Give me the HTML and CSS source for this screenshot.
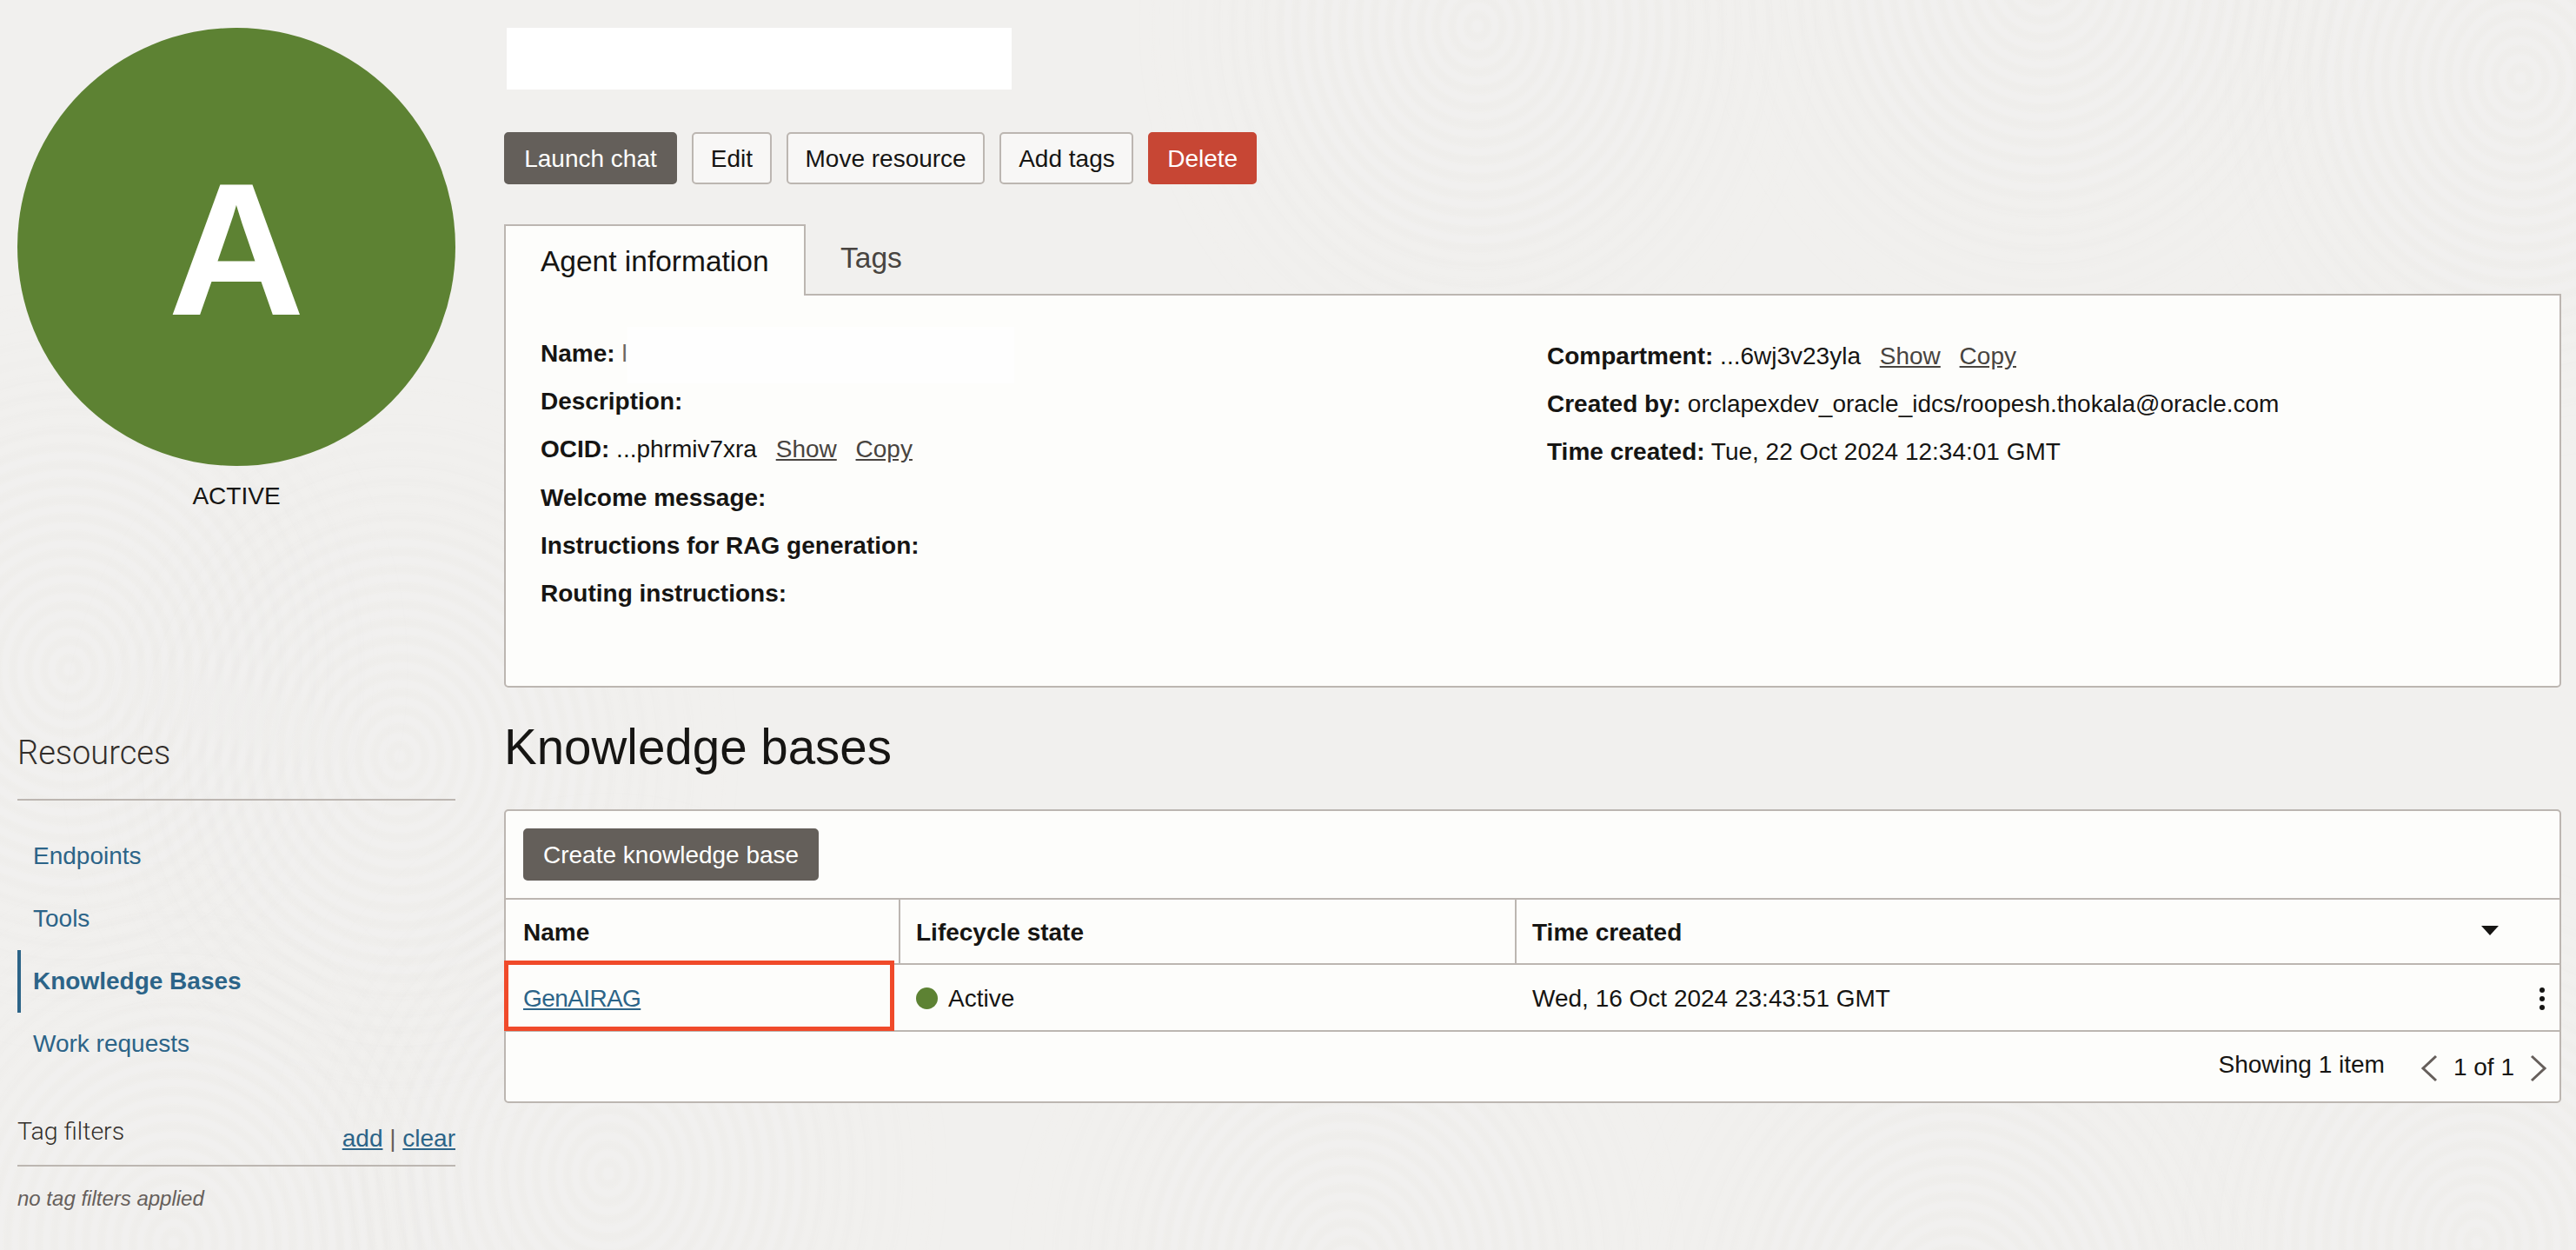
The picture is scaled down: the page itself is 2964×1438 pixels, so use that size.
FILE: index.html
```html
<!DOCTYPE html>
<html lang="en">

<head>
    <meta charset="UTF-8">
    <meta name="viewport" content="width=device-width, initial-scale=1.0">
    <title>Agent details</title>
    <link rel="stylesheet" href="styles.css">
</head>

<body>

    <!-- faint swirls of the console background -->
    <div class="texture">
        <div class="swirl swirl-a"></div>
        <div class="swirl swirl-b"></div>
        <div class="swirl swirl-c"></div>
        <div class="swirl swirl-d"></div>
        <div class="swirl swirl-e"></div>
        <div class="swirl swirl-f"></div>
        <div class="swirl swirl-g"></div>
        <div class="swirl swirl-h"></div>
        <div class="swirl swirl-i"></div>
        <div class="swirl swirl-j"></div>
    </div>

    <div class="page">

        <aside class="sidebar">
            <div class="avatar">A</div>
            <div class="status">ACTIVE</div>

            <h3 class="side-title">Resources</h3>
            <ul class="side-nav">
                <li><a href="#">Endpoints</a></li>
                <li><a href="#">Tools</a></li>
                <li class="selected"><a href="#">Knowledge Bases</a></li>
                <li><a href="#">Work requests</a></li>
            </ul>

            <div class="filter-head">
                <span class="filter-title">Tag filters</span>
                <span class="filter-links"><a href="#">add</a> | <a href="#">clear</a></span>
            </div>
            <p class="filter-empty">no tag filters applied</p>
        </aside>

        <main class="content">
            <div class="title-blank"></div>

            <div class="actions">
                <button class="btn btn-dark btn-launch">Launch chat</button>
                <button class="btn">Edit</button>
                <button class="btn">Move resource</button>
                <button class="btn">Add tags</button>
                <button class="btn btn-danger">Delete</button>
            </div>

            <div class="tabs">
                <div class="tab active">Agent information</div>
                <div class="tab">Tags</div>
            </div>

            <section class="info-panel">
                <div class="info-col">
                    <div class="info-row"><b>Name:</b> <span class="name-sliver">l</span><span class="name-blank"></span></div>
                    <div class="info-row"><b>Description:</b></div>
                    <div class="info-row"><b>OCID:</b> ...phrmiv7xra <a class="plain-link" href="#">Show</a> <a class="plain-link" href="#">Copy</a></div>
                    <div class="info-row"><b>Welcome message:</b></div>
                    <div class="info-row"><b>Instructions for RAG generation:</b></div>
                    <div class="info-row"><b>Routing instructions:</b></div>
                </div>
                <div class="info-col info-col-right">
                    <div class="info-row"><b>Compartment:</b> ...6wj3v23yla <a class="plain-link" href="#">Show</a> <a class="plain-link" href="#">Copy</a></div>
                    <div class="info-row"><b>Created by:</b> orclapexdev_oracle_idcs/roopesh.thokala@oracle.com</div>
                    <div class="info-row"><b>Time created:</b> Tue, 22 Oct 2024 12:34:01 GMT</div>
                </div>
            </section>

            <h2 class="section-title">Knowledge bases</h2>

            <section class="table-card">
                <div class="table-toolbar">
                    <button class="btn btn-dark">Create knowledge base</button>
                </div>
                <div class="table-row table-head">
                    <div class="cell cell-name">Name</div>
                    <div class="cell cell-state">Lifecycle state</div>
                    <div class="cell cell-time">
                        Time created
                        <svg class="sort-icon" width="20" height="11" viewBox="0 0 20 11"><path d="M0 0H20L10 11Z" fill="#161513"/></svg>
                    </div>
                </div>
                <div class="table-row table-body">
                    <div class="cell cell-name"><a class="link" href="#">GenAIRAG</a></div>
                    <div class="cell cell-state"><span class="dot"></span>Active</div>
                    <div class="cell cell-time">
                        Wed, 16 Oct 2024 23:43:51 GMT
                        <svg class="kebab" width="8" height="28" viewBox="0 0 8 28" fill="#161513"><circle cx="4" cy="4" r="3"/><circle cx="4" cy="14" r="3"/><circle cx="4" cy="24" r="3"/></svg>
                    </div>
                </div>
                <div class="table-footer">
                    <span class="showing">Showing 1 item</span>
                    <svg class="pager-icon pager-prev" width="20" height="32" viewBox="0 0 20 32"><path d="M18 2L3 16L18 30" fill="none" stroke="#665f5b" stroke-width="3"/></svg>
                    <span class="page-count">1 of 1</span>
                    <svg class="pager-icon pager-next" width="20" height="32" viewBox="0 0 20 32"><path d="M2 2L17 16L2 30" fill="none" stroke="#665f5b" stroke-width="3"/></svg>
                </div>
                <div class="callout"></div>
            </section>
        </main>

    </div>

</body>

</html>
```

FILE: styles.css
```css
* {
    box-sizing: border-box;
}

html,
body {
    margin: 0;
    height: 100%;
    overflow: hidden;
}

body {
    font-family: "Liberation Sans", Arial, sans-serif;
    font-size: 28px;
    color: #161513;
    background-color: #f1f0ee;
}

a {
    color: #2c6488;
}

/* background */
.texture {
    position: absolute;
    inset: 0;
    overflow: hidden;
}

.swirl {
    position: absolute;
    width: 800px;
    height: 900px;
    border-radius: 50%;
    background: repeating-radial-gradient(ellipse, rgba(255, 255, 255, 0.06) 0 5px, rgba(215, 212, 208, 0.05) 9px 13px, rgba(255, 255, 255, 0.06) 18px);
    -webkit-mask-image: radial-gradient(ellipse, #000 40%, transparent 70%);
    mask-image: radial-gradient(ellipse, #000 40%, transparent 70%);
}

.swirl-a { left: 1300px; top: -420px; }
.swirl-b { left: 1950px; top: -480px; }
.swirl-c { left: 2500px; top: -360px; }
.swirl-d { left: -320px; top: 320px; }
.swirl-e { left: 60px; top: 420px; }
.swirl-f { left: -200px; top: 980px; }
.swirl-g { left: 300px; top: 900px; }
.swirl-h { left: 1150px; top: 1010px; }
.swirl-i { left: 1850px; top: 1060px; }
.swirl-j { left: 2450px; top: 980px; }

.page {
    position: relative;
    display: flex;
    padding: 32px 17px 0 20px;
}

/* left column */
.sidebar {
    width: 504px;
    flex-shrink: 0;
}

.avatar {
    width: 504px;
    height: 504px;
    border-radius: 50%;
    background-color: #5d8233;
    color: #fff;
    font-size: 218px;
    font-weight: bold;
    line-height: 510px;
    text-align: center;
}

.status {
    margin-top: 18px;
    line-height: 34px;
    text-align: center;
}

.side-title {
    margin: 255px 0 0;
    padding-bottom: 30px;
    border-bottom: 2px solid #bcb6b1;
    font-family: Roboto, sans-serif;
    font-size: 38px;
    font-weight: 300;
    line-height: 46px;
    color: #312d2a;
}

.side-nav {
    list-style: none;
    margin: 28px 0 0;
    padding: 0;
}

.side-nav li {
    height: 72px;
    padding-left: 18px;
    line-height: 72px;
}

.side-nav a {
    text-decoration: none;
}

.side-nav .selected {
    padding-left: 14px;
    border-left: 4px solid #2c6488;
    font-weight: bold;
}

.filter-head {
    display: flex;
    justify-content: space-between;
    align-items: flex-end;
    margin-top: 40px;
    padding-bottom: 13px;
    border-bottom: 2px solid #bcb6b1;
}

.filter-title {
    font-family: Roboto, sans-serif;
    font-size: 28.5px;
    font-weight: 300;
    line-height: 50px;
    color: #312d2a;
}

.filter-links {
    line-height: 34px;
    color: #665f5b;
}

.filter-empty {
    margin: 23px 0 0;
    font-size: 24px;
    font-style: italic;
    color: #665f5b;
}

/* right column */
.content {
    flex: 1;
    margin-left: 56px;
    min-width: 0;
}

.title-blank {
    width: 581px;
    height: 71px;
    margin-left: 3px;
    background-color: #fff;
}

.actions {
    display: flex;
    gap: 17px;
    margin-top: 49px;
}

.btn {
    height: 60px;
    padding: 2px 19.75px 0;
    border: 2px solid #bcb6b1;
    border-radius: 5px;
    background-color: #f8f7f6;
    color: #161513;
    font-family: inherit;
    font-size: 28px;
}

.btn-dark {
    padding: 2px 21px 0;
    border-color: #645f5a;
    background-color: #645f5a;
    color: #fff;
}

.btn-launch {
    min-width: 199px;
}

.btn-danger {
    border-color: #c74634;
    background-color: #c74634;
    color: #fff;
}

.tabs {
    display: flex;
    margin-top: 46px;
    margin-bottom: -2px;
}

.tab {
    height: 80px;
    padding: 0 40px;
    color: #484440;
    font-size: 33.5px;
    line-height: 78px;
}

.tab.active {
    position: relative;
    z-index: 1;
    height: 82px;
    padding: 0 40.5px 0 40px;
    border: 2px solid #bcb6b1;
    border-bottom: none;
    background-color: #fdfdfb;
    color: #161513;
    line-height: 82px;
}

.info-panel {
    display: flex;
    height: 453px;
    padding: 39px 40px 0;
    border: 2px solid #bcb6b1;
    border-radius: 0 0 5px 5px;
    background-color: #fdfdfb;
}

.info-col {
    flex: none;
    width: 1158px;
}

.info-col-right {
    flex: 1;
    padding-top: 3px;
}

.info-row {
    height: 55.2px;
    line-height: 55px;
}

.name-sliver {
    color: #6b6660;
    font-weight: normal;
}

.name-blank {
    display: inline-block;
    width: 445px;
    height: 65px;
    margin: -5px 0;
    background-color: #fefefe;
    vertical-align: middle;
}

.plain-link {
    margin-left: 14px;
    color: #484440;
}

.section-title {
    margin: 27px 0 0;
    font-size: 56.5px;
    font-weight: normal;
    line-height: 84px;
}

.table-card {
    position: relative;
    margin-top: 29px;
    border: 2px solid #bcb6b1;
    border-radius: 5px;
    background-color: #fdfdfb;
}

.table-toolbar {
    height: 102px;
    padding: 20px;
    border-bottom: 2px solid #bcb6b1;
}

.table-row {
    display: flex;
    border-bottom: 2px solid #bcb6b1;
}

.table-head {
    height: 75px;
    font-weight: bold;
}

.table-body {
    height: 77px;
}

.cell {
    display: flex;
    align-items: center;
    padding-top: 2px;
    padding-left: 20px;
}

.cell-name {
    width: 452px;
}

.cell-state {
    width: 709px;
}

.cell-time {
    flex: 1;
    justify-content: space-between;
    padding-right: 16px;
}

.table-head .cell-state,
.table-head .cell-time {
    padding-left: 18px;
    border-left: 2px solid #bcb6b1;
}

.sort-icon {
    margin: 0 54px 4px 0;
}

.link {
    color: #2c6488;
    letter-spacing: -0.6px;
}

.dot {
    width: 25px;
    height: 25px;
    margin-right: 12px;
    border-radius: 50%;
    background-color: #5d8233;
}

.table-footer {
    display: flex;
    justify-content: flex-end;
    align-items: center;
    height: 80px;
    padding-right: 14px;
}

.showing {
    margin-bottom: 4px;
}

.page-count {
    margin-top: 2px;
}

.pager-prev {
    margin: 4px 18px 0 41px;
}

.pager-next {
    margin: 4px 0 0 18px;
}

/* red annotation round the row */
.callout {
    position: absolute;
    left: -2px;
    top: 172px;
    width: 449px;
    height: 81px;
    border: 5px solid #f04a2a;
}
```
